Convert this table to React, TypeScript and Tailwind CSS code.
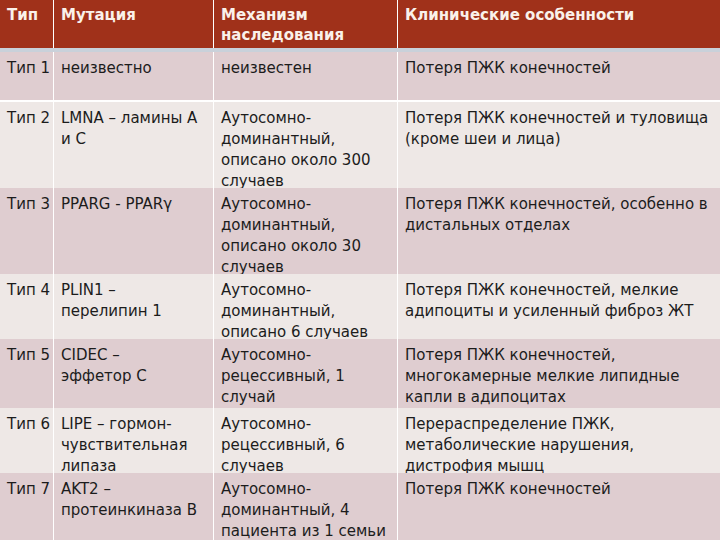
const rows = [
  {
    type: "Тип 1",
    mutation: "неизвестно",
    mechanism: "неизвестен",
    features: "Потеря ПЖК конечностей",
    h: "h-[48px]",
  },
  {
    type: "Тип 2",
    mutation: "LMNA – ламины А и С",
    mechanism: "Аутосомно-доминантный, описано около 300 случаев",
    features: "Потеря ПЖК конечностей и туловища (кроме шеи и лица)",
    h: "h-[84px]",
  },
  {
    type: "Тип 3",
    mutation: "PPARG - PPARγ",
    mechanism: "Аутосомно-доминантный, описано около 30 случаев",
    features: "Потеря ПЖК конечностей, особенно в дистальных отделах",
    h: "h-[84px]",
  },
  {
    type: "Тип 4",
    mutation: "PLIN1 –\nперелипин 1",
    mechanism: "Аутосомно-доминантный, описано 6 случаев",
    features: "Потеря ПЖК конечностей, мелкие адипоциты и усиленный фиброз ЖТ",
    h: "h-[63px]",
  },
  {
    type: "Тип 5",
    mutation: "CIDEC –\nэффетор С",
    mechanism: "Аутосомно-рецессивный, 1 случай",
    features: "Потеря ПЖК конечностей, многокамерные мелкие липидные капли в адипоцитах",
    h: "h-[67px]",
  },
  {
    type: "Тип 6",
    mutation: "LIPE – гормон-чувствительная липаза",
    mechanism: "Аутосомно-рецессивный, 6 случаев",
    features: "Перераспределение ПЖК, метаболические нарушения, дистрофия мышц",
    h: "h-[63px]",
  },
  {
    type: "Тип 7",
    mutation: "AKT2 –\nпротеинкиназа B",
    mechanism: "Аутосомно-доминантный, 4 пациента из 1 семьи",
    features: "Потеря ПЖК конечностей",
    h: "h-[80px]",
  },
];

const cols = "grid grid-cols-[53px_159px_183px_1fr] gap-x-px";

export default function App() {
  return (
    <div
      className="w-[720px] h-[540px] overflow-hidden bg-white text-[15px] leading-[21px] text-[#1c1c1c]"
      style={{ fontFamily: '"DejaVu Sans", "Noto Sans", sans-serif' }}
    >
      {/* Header */}
      <div className={`${cols} h-[48px] bg-white`}>
        {["Тип", "Мутация", "Механизм наследования", "Клинические особенности"].map((t) => (
          <div key={t} className="bg-[#a0311a] px-[7px] pt-[5px] font-bold leading-[20px] text-[#faf1ea]">
            {t}
          </div>
        ))}
      </div>
      <div className="h-[4px] bg-[#c9d1da]" />

      {/* Body */}
      <div className="flex flex-col gap-y-[2px]">
        {rows.map((r, i) => (
          <div key={r.type} className={`${cols} ${r.h}`}>
            {[r.type, r.mutation, r.mechanism, r.features].map((c, j) => (
              <div
                key={j}
                className={`${i % 2 === 0 ? "bg-[#dfcdd0]" : "bg-[#eee8e6]"} whitespace-pre-line px-[7px] pt-[6px] ${
                  j === 0 ? "pr-0 whitespace-nowrap" : ""
                }`}
              >
                {c}
              </div>
            ))}
          </div>
        ))}
      </div>
    </div>
  );
}
